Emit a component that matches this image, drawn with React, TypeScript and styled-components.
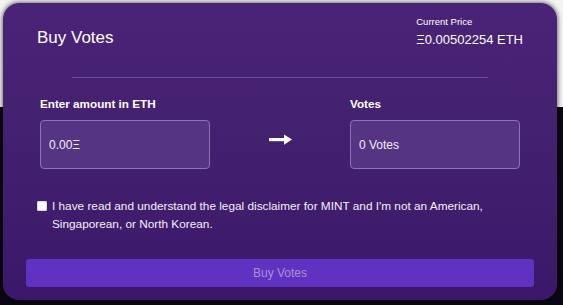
import React from "react";
import styled, { createGlobalStyle } from "styled-components";

const Global = createGlobalStyle`
  html, body { margin: 0; padding: 0; }
  body { font-family: "Liberation Sans", Arial, sans-serif; }
  * { box-sizing: border-box; }
`;

const Page = styled.div`
  width: 563px;
  height: 305px;
  overflow: hidden;
  padding: 3px 0 0 3px;
  background: linear-gradient(180deg, #f3f3f3 0px, #f3f3f3 107px, #0c0917 107px, #0a0714 100%);
`;

const Card = styled.div`
  width: 554px;
  height: 297px;
  border-radius: 16px;
  padding: 0 23px 13px;
  display: flex;
  flex-direction: column;
  background: linear-gradient(180deg, #4a2377 0%, #43206f 50%, #3b176a 100%);
  box-shadow: 0 0 4px 1px rgba(0, 0, 0, 0.55);
  color: #ffffff;
`;

const Header = styled.div`
  display: flex;
  justify-content: space-between;
  align-items: flex-start;
  padding: 14px 11px 0 11px;
  height: 46px;
`;

const Title = styled.h1`
  margin: 11px 0 0;
  font-size: 17px;
  font-weight: 400;
  line-height: 20px;
`;

const PriceBlock = styled.div`
  display: flex;
  flex-direction: column;
  gap: 5px;
  margin-left: auto;
  padding-left: 2px;
`;

const PriceLabel = styled.span`
  font-size: 9.5px;
  line-height: 11px;
  margin-top: -1px;
`;

const PriceValue = styled.span`
  font-size: 13px;
  line-height: 15px;
`;

const Divider = styled.hr`
  width: 416px;
  margin: 28px auto 0;
  border: none;
  height: 1px;
  background: #6c4f9f;
`;

const ExchangeRow = styled.div`
  display: flex;
  justify-content: space-between;
  align-items: flex-start;
  padding: 19px 14px 0;
`;

const Field = styled.div`
  display: flex;
  flex-direction: column;
  gap: 10px;
  width: 170px;
`;

const FieldLabel = styled.label`
  font-size: 11.7px;
  font-weight: 700;
  line-height: 13px;
`;

const FieldBox = styled.div`
  height: 49px;
  border: 1px solid #8c74b3;
  border-radius: 4px;
  background: #553583;
  display: flex;
  align-items: center;
  padding: 0 8px;
  font-size: 12px;
  color: #f2eef8;
`;

const ArrowWrap = styled.div`
  margin-top: 37px;
  display: flex;
  align-items: center;
`;

const Agreement = styled.label`
  display: flex;
  align-items: flex-start;
  gap: 5px;
  margin: 28px 0 0;
  padding: 0 11px;
  font-size: 11.8px;
  line-height: 18px;
  color: #f4f0fa;
`;

const Box = styled.span`
  flex: none;
  width: 10px;
  height: 10px;
  margin-top: 4px;
  background: #ffffff;
  border: 1px solid #d8d8d8;
  border-radius: 1px;
`;

const BuyButton = styled.button`
  margin-top: auto;
  height: 28px;
  width: 100%;
  border: none;
  border-radius: 3px;
  background: #6131c1;
  color: #a891d2;
  font-family: "Liberation Sans", Arial, sans-serif;
  font-size: 12px;
`;

const Arrow = () => (
  <svg width="23" height="11" viewBox="0 0 23 11">
    <rect x="0" y="4" width="16" height="3.2" fill="#ffffff" />
    <polygon points="15,0.5 23,5.6 15,10.7" fill="#ffffff" />
  </svg>
);

export default function App() {
  return (
    <>
      <Global />
      <Page>
        <Card>
          <Header>
            <Title>Buy Votes</Title>
            <PriceBlock>
              <PriceLabel>Current Price</PriceLabel>
              <PriceValue>Ξ0.00502254 ETH</PriceValue>
            </PriceBlock>
          </Header>
          <Divider />
          <ExchangeRow>
            <Field>
              <FieldLabel>Enter amount in ETH</FieldLabel>
              <FieldBox>0.00Ξ</FieldBox>
            </Field>
            <ArrowWrap>
              <Arrow />
            </ArrowWrap>
            <Field>
              <FieldLabel>Votes</FieldLabel>
              <FieldBox>0 Votes</FieldBox>
            </Field>
          </ExchangeRow>
          <Agreement>
            <Box />
            <span>
              I have read and understand the legal disclaimer for MINT and I'm not an American,
              Singaporean, or North Korean.
            </span>
          </Agreement>
          <BuyButton>Buy Votes</BuyButton>
        </Card>
      </Page>
    </>
  );
}
